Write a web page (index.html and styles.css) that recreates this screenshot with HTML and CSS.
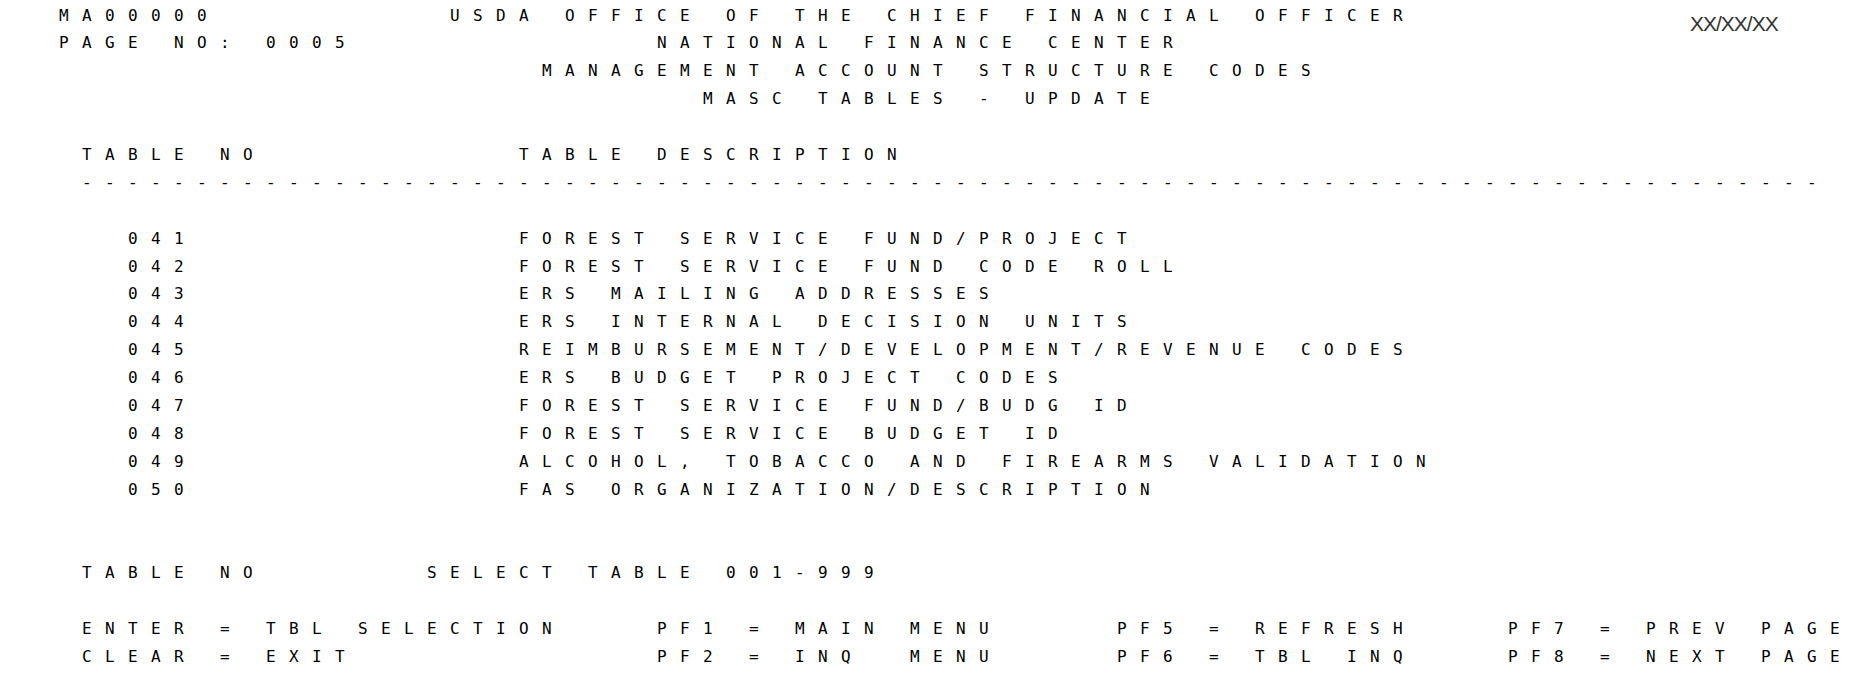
FILE: index.html
```html
<!DOCTYPE html>
<html lang="en">
<head>
<meta charset="utf-8">
<title>MASC TABLES - UPDATE</title>
<link rel="stylesheet" href="styles.css">
</head>
<body>
<main class="screen">
  <div class="row">
    <span class="f c2">MA00000</span>
    <span class="f c19">USDA OFFICE OF THE CHIEF FINANCIAL OFFICER</span>
    <span class="date">XX/XX/XX</span>
  </div>
  <div class="row">
    <span class="f c2">PAGE NO: 0005</span>
    <span class="f c28">NATIONAL FINANCE CENTER</span>
  </div>
  <div class="row">
    <span class="f c23">MANAGEMENT ACCOUNT STRUCTURE CODES</span>
  </div>
  <div class="row">
    <span class="f c30">MASC TABLES - UPDATE</span>
  </div>
  <div class="row"></div>
  <div class="row">
    <span class="f c3">TABLE NO</span>
    <span class="f c22">TABLE DESCRIPTION</span>
  </div>
  <div class="row">
    <span class="f c3">----------------------------------------------------------------------------</span>
  </div>
  <div class="row"></div>
  <div class="row"><span class="f c5">041</span><span class="f c22">FOREST SERVICE FUND/PROJECT</span></div>
  <div class="row"><span class="f c5">042</span><span class="f c22">FOREST SERVICE FUND CODE ROLL</span></div>
  <div class="row"><span class="f c5">043</span><span class="f c22">ERS MAILING ADDRESSES</span></div>
  <div class="row"><span class="f c5">044</span><span class="f c22">ERS INTERNAL DECISION UNITS</span></div>
  <div class="row"><span class="f c5">045</span><span class="f c22">REIMBURSEMENT/DEVELOPMENT/REVENUE CODES</span></div>
  <div class="row"><span class="f c5">046</span><span class="f c22">ERS BUDGET PROJECT CODES</span></div>
  <div class="row"><span class="f c5">047</span><span class="f c22">FOREST SERVICE FUND/BUDG ID</span></div>
  <div class="row"><span class="f c5">048</span><span class="f c22">FOREST SERVICE BUDGET ID</span></div>
  <div class="row"><span class="f c5">049</span><span class="f c22">ALCOHOL, TOBACCO AND FIREARMS VALIDATION</span></div>
  <div class="row"><span class="f c5">050</span><span class="f c22">FAS ORGANIZATION/DESCRIPTION</span></div>
  <div class="row"></div>
  <div class="row"></div>
  <div class="row">
    <span class="f c3">TABLE NO</span>
    <span class="f c18">SELECT TABLE 001-999</span>
  </div>
  <div class="row"></div>
  <div class="row">
    <span class="f c3">ENTER = TBL SELECTION</span>
    <span class="f c28">PF1 = MAIN MENU</span>
    <span class="f c48">PF5 = REFRESH</span>
    <span class="f c65">PF7 = PREV PAGE</span>
  </div>
  <div class="row">
    <span class="f c3">CLEAR = EXIT</span>
    <span class="f c28">PF2 = INQ  MENU</span>
    <span class="f c48">PF6 = TBL INQ</span>
    <span class="f c65">PF8 = NEXT PAGE</span>
  </div>
</main>
</body>
</html>
```

FILE: styles.css
```css
html, body {
  margin: 0;
  padding: 0;
  background: #ffffff;
}

.screen {
  padding-top: 1.5px;
  padding-left: 13px;
  color: #000000;
  font-family: "DejaVu Sans Mono", "Liberation Mono", monospace;
  font-size: 16px;
  line-height: 27.9px;
}

.row {
  display: grid;
  grid-template-columns: repeat(80, 23px);
  height: 27.9px;
}

.f {
  grid-row: 1;
  white-space: pre;
  letter-spacing: 13.367px;
}

.c2 { grid-column-start: 3; }
.c3 { grid-column-start: 4; }
.c5 { grid-column-start: 6; }
.c18 { grid-column-start: 19; }
.c19 { grid-column-start: 20; }
.c22 { grid-column-start: 23; }
.c23 { grid-column-start: 24; }
.c28 { grid-column-start: 29; }
.c30 { grid-column-start: 31; }
.c48 { grid-column-start: 49; }
.c65 { grid-column-start: 66; }

.date {
  grid-row: 1;
  grid-column-start: 73;
  margin-left: 21px;
  margin-top: 8px;
  white-space: pre;
  font-family: "Liberation Sans", Arial, sans-serif;
  font-size: 21px;
  letter-spacing: -1px;
  line-height: 27.9px;
  color: #333333;
}
```
